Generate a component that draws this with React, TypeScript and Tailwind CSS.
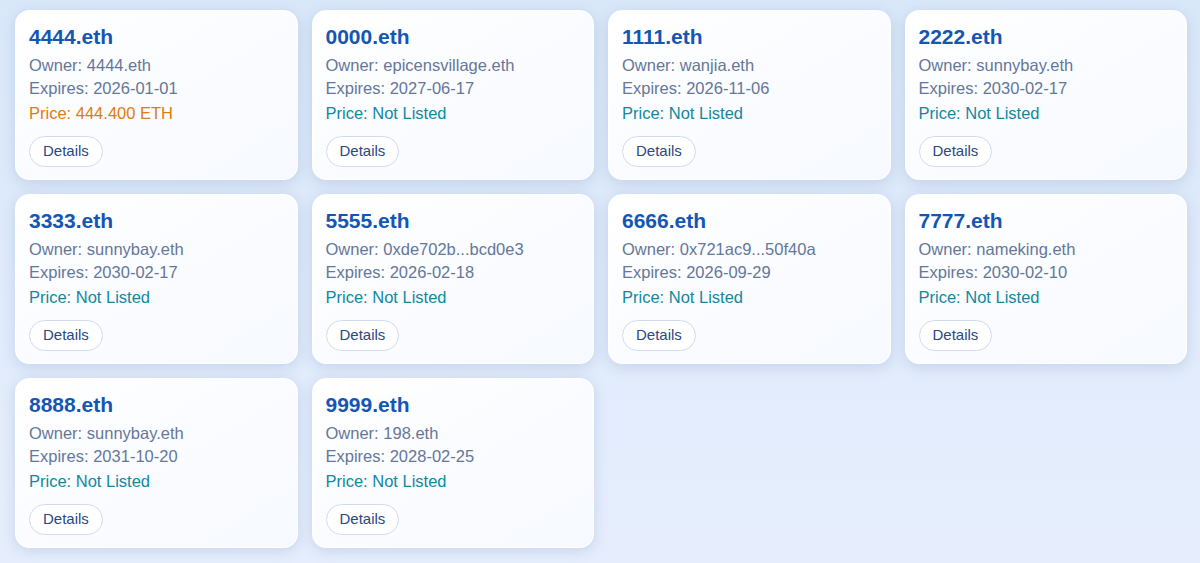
type Domain = {
  name: string;
  owner: string;
  expires: string;
  price?: string;
};

const domains: Domain[] = [
  { name: '4444.eth', owner: '4444.eth', expires: '2026-01-01', price: '444.400 ETH' },
  { name: '0000.eth', owner: 'epicensvillage.eth', expires: '2027-06-17' },
  { name: '1111.eth', owner: 'wanjia.eth', expires: '2026-11-06' },
  { name: '2222.eth', owner: 'sunnybay.eth', expires: '2030-02-17' },
  { name: '3333.eth', owner: 'sunnybay.eth', expires: '2030-02-17' },
  { name: '5555.eth', owner: '0xde702b...bcd0e3', expires: '2026-02-18' },
  { name: '6666.eth', owner: '0x721ac9...50f40a', expires: '2026-09-29' },
  { name: '7777.eth', owner: 'nameking.eth', expires: '2030-02-10' },
  { name: '8888.eth', owner: 'sunnybay.eth', expires: '2031-10-20' },
  { name: '9999.eth', owner: '198.eth', expires: '2028-02-25' },
];

function DomainCard({ domain }: { domain: Domain }) {
  return (
    <div className="h-[170px] rounded-[14px] bg-gradient-to-br from-white to-[#f6f9ff] px-[13px] pt-[14px] shadow-[0_3px_14px_rgba(90,120,170,0.22)] border border-white">
      <h3 className="text-[21px] leading-6 font-bold text-[#1456b4]">{domain.name}</h3>
      <p className="mt-[5px] text-[16.5px] leading-[23px] text-[#64779a]">Owner: {domain.owner}</p>
      <p className="text-[16.5px] leading-[23px] text-[#64779a]">Expires: {domain.expires}</p>
      {domain.price ? (
        <p className="mt-[2px] text-[16.5px] leading-[23px] text-[#df7b10]">Price: {domain.price}</p>
      ) : (
        <p className="mt-[2px] text-[16.5px] leading-[23px] text-[#11889e]">Price: Not Listed</p>
      )}
      <button className="mt-[11px] h-[31px] px-[13px] rounded-full border border-[#cfdcee] bg-white text-[15px] text-[#29497f]">
        Details
      </button>
    </div>
  );
}

export default function App() {
  return (
    <div
      className="min-h-screen bg-gradient-to-b from-[#d9e8f9] to-[#e6eefd] pl-[15px] pr-[13px] pt-[10px] pb-4"
      style={{ fontFamily: '"Liberation Sans", Arial, sans-serif' }}
    >
      <div className="grid grid-cols-4 gap-[14px]">
        {domains.map((d) => (
          <DomainCard key={d.name} domain={d} />
        ))}
      </div>
    </div>
  );
}
